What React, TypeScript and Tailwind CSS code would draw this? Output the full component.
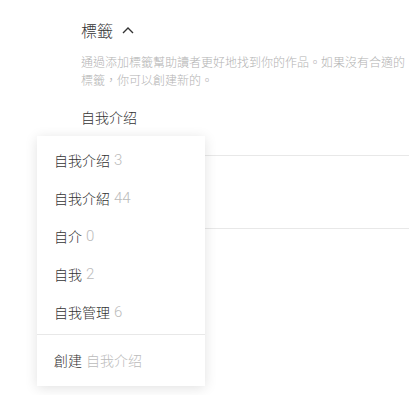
import React from "react";

const items = [
  { label: "自我介绍", count: "3" },
  { label: "自我介紹", count: "44" },
  { label: "自介", count: "0" },
  { label: "自我", count: "2" },
  { label: "自我管理", count: "6" },
];

const num = { fontFamily: 'Roboto, "Liberation Sans", sans-serif' };

export default function App() {
  return (
    <div
      className="relative w-[418px] h-[395px] bg-white overflow-hidden"
      style={{ fontFamily: '"Noto Sans CJK TC", "Noto Sans CJK SC", "Noto Sans", sans-serif' }}
    >
      <div className="pl-[81px] pr-[9px] pt-[19px]">
        <div className="flex items-center gap-[9px] h-[22px] text-[16px] font-light text-[#333]">
          <span>標籤</span>
          <svg width="12" height="8" viewBox="0 0 12 8" fill="none" stroke="#333" strokeWidth="1.4">
            <path d="M1 7 L6 2 L11 7" />
          </svg>
        </div>
        <p className="mt-[12px] text-[12px] leading-[18px] font-light text-[#b3b3b3]" style={{ lineHeight: "18px" }}>
          通過添加標籤幫助讀者更好地找到你的作品。如果沒有合適的標籤，你可以創建新的。
        </p>
        <div className="mt-[18px] h-[20px] text-[14px] leading-[20px] font-light text-[#333]">自我介绍</div>
        <div className="mt-[28px] h-px bg-[#e8e8e8]" />
        <div className="mt-[72px] h-px bg-[#e8e8e8]" />
      </div>

      <div className="absolute left-[37px] top-[136px] w-[168px] bg-white shadow-[0_2px_12px_rgba(0,0,0,0.12)]">
        <div className="pt-[5px]">
          {items.map((it, i) => (
            <div key={i} className="h-[38px] flex items-center pl-[17px] text-[14px] font-light text-[#333]">
              <span>{it.label}</span>
              <span className="ml-[4px] text-[15px] font-light text-[#bbb]" style={num}>{it.count}</span>
            </div>
          ))}
        </div>
        <div className="mt-[3px] h-px bg-[#e8e8e8]" />
        <div className="h-[51px] flex items-center pl-[17px] text-[14px] font-light text-[#333]">
          <span>創建</span>
          <span className="ml-[4px] text-[#bbb]">自我介绍</span>
        </div>
      </div>
    </div>
  );
}
